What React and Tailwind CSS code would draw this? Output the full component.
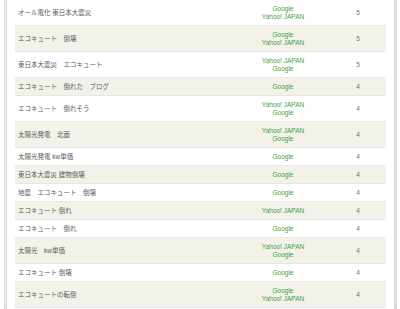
const rows = [
  { kw: "オール電化 東日本大震災", engines: ["Google", "Yahoo! JAPAN"], n: 5 },
  { kw: "エコキュート　倒壊", engines: ["Google", "Yahoo! JAPAN"], n: 5 },
  { kw: "東日本大震災　エコキュート", engines: ["Yahoo! JAPAN", "Google"], n: 5 },
  { kw: "エコキュート　倒れた　ブログ", engines: ["Google"], n: 4 },
  { kw: "エコキュート　倒れそう", engines: ["Yahoo! JAPAN", "Google"], n: 4 },
  { kw: "太陽光発電　北面", engines: ["Yahoo! JAPAN", "Google"], n: 4 },
  { kw: "太陽光発電 kw単価", engines: ["Google"], n: 4 },
  { kw: "東日本大震災 建物倒壊", engines: ["Google"], n: 4 },
  { kw: "地震　エコキュート　倒壊", engines: ["Google"], n: 4 },
  { kw: "エコキュート 倒れ", engines: ["Yahoo! JAPAN"], n: 4 },
  { kw: "エコキュート　倒れ", engines: ["Google"], n: 4 },
  { kw: "太陽光　kw単価", engines: ["Yahoo! JAPAN", "Google"], n: 4 },
  { kw: "エコキュート 倒壊", engines: ["Google"], n: 4 },
  { kw: "エコキュートの転倒", engines: ["Google", "Yahoo! JAPAN"], n: 4 },
];

export default function App() {
  return (
    <div
      className="flex w-[400px] h-[309px] overflow-hidden bg-white text-[6.5px] leading-[8px] text-[#5a5a5a]"
      style={{ fontFamily: '"Liberation Sans", "Noto Sans CJK JP", sans-serif' }}
    >
      <div className="w-[15px] shrink-0 flex">
        <div className="ml-[4px] w-[3px] border-x border-dotted border-[#d4d4d4] bg-[#ebebeb]" />
      </div>

      <table className="w-[371px] shrink-0 border-collapse self-start">
        <tbody>
          {rows.map((r, i) => (
            <tr
              key={i}
              className={`border-b border-[#e8e8e2] ${i % 2 ? "bg-[#f2f2ea]" : "bg-white"}`}
            >
              <td className="w-[221px] pl-[3px] py-[4.5px] align-middle">{r.kw}</td>
              <td className="w-[94px] py-[4.5px] text-center text-[#3f9e3f] align-middle">
                {r.engines.map((e) => (
                  <div key={e}>{e}</div>
                ))}
              </td>
              <td className="py-[4.5px] text-center text-[#707070] align-middle">{r.n}</td>
            </tr>
          ))}
        </tbody>
      </table>

      <div className="w-[14px] shrink-0 flex">
        <div className="ml-[8px] w-[3px] border-x border-dotted border-[#d0d0d0] bg-[#e2e2e2]" />
      </div>
    </div>
  );
}
